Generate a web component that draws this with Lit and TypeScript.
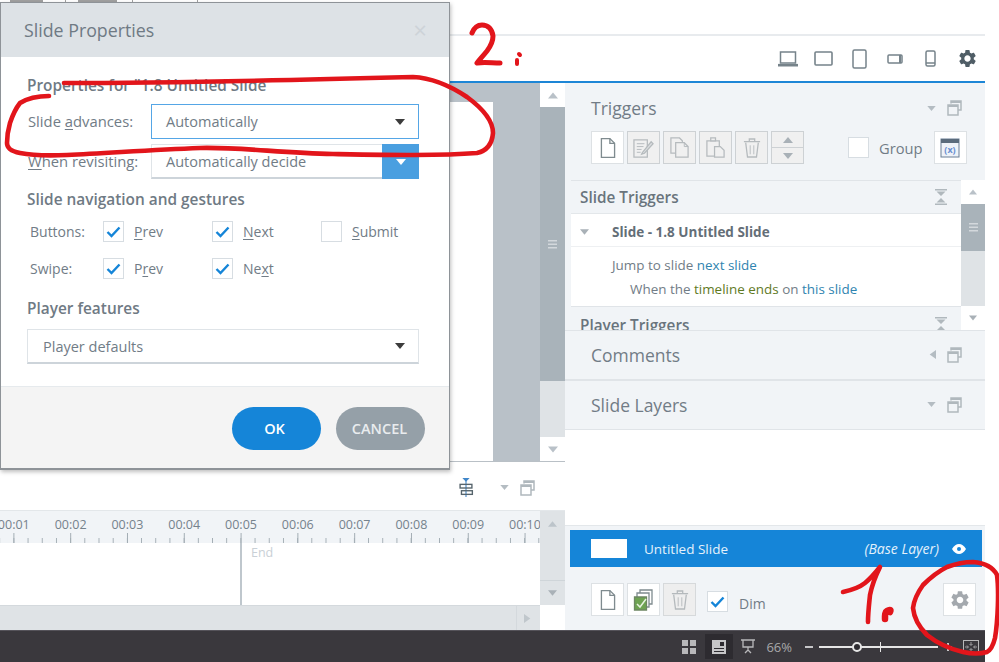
import { LitElement, html, css, svg } from "lit";
import { customElement } from "lit/decorators.js";

const GEAR = "M19.14 12.94c.04-.3.06-.61.06-.94 0-.32-.02-.64-.07-.94l2.03-1.58a.49.49 0 0 0 .12-.61l-1.92-3.32a.488.488 0 0 0-.59-.22l-2.39.96c-.5-.38-1.03-.7-1.62-.94l-.36-2.54a.484.484 0 0 0-.48-.41h-3.84c-.24 0-.43.17-.47.41l-.36 2.54c-.59.24-1.13.57-1.62.94l-2.39-.96c-.22-.08-.47 0-.59.22L2.74 8.87c-.12.21-.08.47.12.61l2.03 1.58c-.05.3-.09.63-.09.94s.02.64.07.94l-2.03 1.58a.49.49 0 0 0-.12.61l1.92 3.32c.12.22.37.29.59.22l2.39-.96c.5.38 1.03.7 1.62.94l.36 2.54c.05.24.24.41.48.41h3.84c.24 0 .44-.17.47-.41l.36-2.54c.59-.24 1.13-.56 1.62-.94l2.39.96c.22.08.47 0 .59-.22l1.92-3.32c.12-.22.07-.47-.12-.61l-2.01-1.58zM12 15.6c-1.98 0-3.6-1.62-3.6-3.6s1.62-3.6 3.6-3.6 3.6 1.62 3.6 3.6-1.62 3.6-3.6 3.6z";

const gear = (size: number, color: string) => html`<svg width=${size} height=${size} viewBox="0 0 24 24"><path d=${GEAR} fill=${color}></path></svg>`;

const docIcon = (c = "#7f8b8f") => html`<svg width="16" height="22" viewBox="0 0 17 23" fill="#fff" stroke=${c} stroke-width="1.4"><path d="M1.5 1.5h9l5 5v15h-14z"></path><path d="M10.5 1.5v5h5" fill="none"></path></svg>`;
const editIcon = () => html`<svg width="23" height="22" viewBox="0 0 24 23" fill="none" stroke="#b5babd" stroke-width="1.3"><path d="M2 3h14v18H2z"></path><path d="M5 7h8M5 10h7M5 13h5M5 16h4" stroke-width="1"></path><path d="M11 16l9-11 2 2-9 10-3 1z" fill="#dcdfe1"></path></svg>`;
const copyIcon = () => html`<svg width="21" height="23" viewBox="0 0 22 24" fill="#f0f0f0" stroke="#b5babd" stroke-width="1.3"><path d="M2 2h9l3 3v13H2z"></path><path d="M7 7h9l4 4v11H7z"></path><path d="M16 7v4h4" fill="none" stroke-width="1"></path></svg>`;
const pasteIcon = () => html`<svg width="21" height="23" viewBox="0 0 22 24" fill="#f0f0f0" stroke="#b5babd" stroke-width="1.3"><path d="M2 5h13v16H2z"></path><path d="M6 5V2h5v3z"></path><path d="M10 11h6l4 4v7H10z"></path></svg>`;
const trashIcon = (c = "#b5babd") => html`<svg width="18" height="22" viewBox="0 0 20 24" fill="none" stroke=${c} stroke-width="1.4"><path d="M1 5h18M7 5V2h6v3"></path><path d="M3 6l2 16h10l2-16"></path><path d="M8 9v10M12 9v10" stroke-width="1"></path></svg>`;
const windowIcon = () => html`<svg width="15" height="16" viewBox="0 0 15 16" fill="none" stroke="#b0b8bd" stroke-width="1.5"><path d="M4 3.500V1h10v9h-3"></path><path d="M1 5h10v10H1z"></path><path d="M1 6h10M4 2h10" stroke-width="2"></path></svg>`;
const tri = (dir: string, color: string, w = 10, h = 6) => {
  const pts: Record<string, string> = { down: "0,0 10,0 5,6", up: "0,6 10,6 5,0", left: "10,0 10,10 3,5", right: "0,0 0,10 7,5" };
  return html`<svg width=${w} height=${h} viewBox=${dir === "down" || dir === "up" ? "0 0 10 6" : "0 0 10 10"}><polygon points=${pts[dir]} fill=${color}></polygon></svg>`;
};
const collapseIcon = () => html`<svg width="12" height="16" viewBox="0 0 12 16" fill="#b0b8bd"><path d="M0 0h12v1.400H0zM1.500 2.500h9L6 7zM6 9l4.500 4.500h-9zM0 14.600h12V16H0z"></path></svg>`;
const check = () => html`<svg width="15" height="12" viewBox="0 0 15 12" fill="none" stroke="#1585d8" stroke-width="2.400"><path d="M1.500 6l4 4 8-8.500"></path></svg>`;
const grip = () => html`<svg width="9" height="9" viewBox="0 0 9 9" fill="#d3d8dc"><path d="M0 0h9v1.600H0zM0 3.500h9v1.600H0zM0 7h9v1.600H0z"></path></svg>`;

@customElement("app-root")
export class AppRoot extends LitElement {
  static styles = css`
    :host { display: block; position: relative; width: 999px; height: 662px; overflow: hidden; background: #fff;
      font-family: "Open Sans", "Noto Sans", sans-serif; color: #717c86; font-size: 14px; }
    * { box-sizing: border-box; }
    u { text-underline-offset: 2px; }
    .app { width: 985px; height: 662px; display: flex; flex-direction: column; }

    .ribbon { height: 36px; flex: none; border-bottom: 2px solid #e8ebee; display: flex; align-items: flex-start; }
    .ribbon i { display: block; height: 2px; background: #a0a0a0; }
    .viewbar { height: 47px; flex: none; display: flex; align-items: center; justify-content: flex-end; padding: 0 7px 0 0; border-bottom: 2px solid #1d86d6; }
    .viewbar svg { display: block; }
    .dev { display: flex; justify-content: center; align-items: center; }

    .main { flex: 1; display: flex; min-height: 0; }
    .left { width: 565px; flex: none; display: flex; flex-direction: column; }
    .right { flex: 1; min-width: 0; display: flex; flex-direction: column; background: #f1f4f7; }

    .stage { height: 379px; flex: none; display: flex; border-bottom: 1px solid #b9c0c6; }
    .canvas { flex: 1; background: #b9c1c8; padding: 19px 47px 0 0; }
    .slide { background: #fff; height: 100%; }
    .vscroll { width: 25px; flex: none; display: flex; flex-direction: column; background: #dfe3e6; }
    .sbtn { height: 24px; flex: none; background: #fff; display: flex; align-items: center; justify-content: center; }
    .thumb { background: #a9b3ba; display: flex; align-items: center; justify-content: center; flex: none; }
    .track { flex: 1; }

    .tl-tools { height: 49px; flex: none; display: flex; align-items: center; justify-content: flex-end; padding: 3px 30px 0 0; gap: 11px; border-bottom: 1px solid #e3e7ea; }
    .tl-tools .align { margin-right: 14px; display: block; }
    .tl-body { flex: 1; display: flex; min-height: 0; }
    .tl-main { flex: 1; min-width: 0; display: flex; flex-direction: column; }
    .ruler { height: 32px; flex: none; overflow: hidden; background-color: #f1f4f7;
      background-image: linear-gradient(90deg, #a3adb4 1px, transparent 1px), linear-gradient(90deg, #a3adb4 1px, transparent 1px);
      background-repeat: repeat-x; background-size: 56.8px 10px, 14.2px 5px;
      background-position: 13.4px 100%, 13.4px 100%; }
    .labels { display: flex; margin-left: -14.6px; padding-top: 5px; }
    .labels span { width: 56.8px; flex: none; text-align: center; font-size: 12.5px; line-height: 18px; color: #75828c; }
    .tracks { flex: 1; background: #fff; padding-left: 240px; display: flex; }
    .endline { border-left: 2px solid #bfc7cd; padding: 1px 0 0 9px; font-size: 12.5px; line-height: 18px; color: #c9d0d6; }
    .hscroll { height: 25px; flex: none; background: #dfe3e6; border-top: 1px solid #d4d9dd; display: flex; justify-content: flex-end; }
    .hbtn { width: 24px; border-left: 1px solid #d4d9dd; display: flex; align-items: center; justify-content: center; }
    .tl-vs { width: 25px; flex: none; display: flex; flex-direction: column; margin-bottom: 25px; background: #dfe3e6; }
    .tl-vs .b { height: 26px; display: flex; align-items: center; justify-content: center; }
    .tl-vs .b.low { height: 24px; }
    .tl-vs .m { flex: 1; border-bottom: 1px solid #cfd5d9; }

    .panel { padding: 0 23px 0 26px; }
    .ptitle { display: flex; align-items: center; font-size: 17.5px; color: #717c86; }
    .ptitle span { flex: 1; }
    .ptitle .chev { margin-right: 11px; display: flex; align-items: center; justify-content: center; width: 10px; }
    .triggers { height: 97px; flex: none; padding-top: 10px; }
    .triggers .ptitle { height: 30px; }
    .tools { display: flex; align-items: center; margin-top: 8px; gap: 3px; }
    .tb { width: 33px; height: 33px; border: 1.5px solid #dde1e4; background: #fff; display: flex; align-items: center; justify-content: center; flex: none; }
    .tb.off { background: #f0f0f0; border-color: #cdd1d4; }
    .tb.ud { flex-direction: column; padding: 0; }
    .tb.ud div { flex: 1; width: 100%; display: flex; align-items: center; justify-content: center; }
    .tb.ud div + div { border-top: 1.5px solid #cdd1d4; }
    .box { width: 21px; height: 21px; border: 1.5px solid #d7dde2; background: #fff; display: flex; align-items: center; justify-content: center; flex: none; }
    .grp { margin-left: 41px; }
    .grptxt { margin: 0 8px 0 7px; font-size: 14.7px; }

    .tlist { height: 150px; flex: none; display: flex; overflow: hidden; padding-left: 6px; }
    .tl { flex: 1; min-width: 0; background: #fff; }
    .thead { height: 34px; background: #f1f4f7; border-top: 1px solid #e0e4e8; border-bottom: 1.5px solid #e3e7ea; display: flex; align-items: center; justify-content: space-between; padding: 0 14px 0 9px; font-weight: 600; font-size: 15.3px; color: #69747d; }
    .thead.low { padding-top: 4px; }
    .trow { height: 33px; padding-top: 3px; border-bottom: 1.5px solid #eef0f2; display: flex; align-items: center; font-weight: 700; font-size: 13.5px; color: #646e77; }
    .trow .ar { width: 41px; padding-left: 9px; display: flex; }
    .act { padding: 6px 0 0 41px; height: 59px; font-size: 13.45px; line-height: 24px; color: #717c86; }
    .act div + div { padding-left: 18px; }
    .blue { color: #2f84b0; }
    .olive { color: #5f7a1f; }
    .tl-scroll { width: 24px; flex: none; display: flex; flex-direction: column; background: #dfe3e6; }

    .sec { height: 50px; flex: none; display: flex; align-items: center; padding-bottom: 1px; border-top: 1px solid #e0e4e8; border-bottom: 1px solid #e0e4e8; }
    .sec .ptitle { flex: 1; }
    .blank { height: 96px; flex: none; background: #fff; border-bottom: 1.5px solid #e3e7ea; }
    .layer { height: 37px; flex: none; margin: 4px 3px 0 5px; background: #1585d8; display: flex; align-items: center; padding: 0 16px 0 21px; color: #e4f1fb; }
    .layer .pic { width: 36px; height: 19px; background: #fff; margin-right: 17px; }
    .layer .nm { flex: 1; font-size: 13.5px; }
    .layer em { font-size: 14px; margin-right: 13px; }
    .laytools { flex: 1; display: flex; align-items: flex-start; padding: 16px 9px 0 26px; gap: 3px; }
    .laytools .box { margin: 8px 0 0 8px; }
    .laytools .dim { margin: 11px 0 0 8px; font-size: 14px; flex: 1; }
    .tb.off2 { background: #eeeeee; border-color: #d6d9db; }

    .status { height: 32px; flex: none; background: #3a383d; display: flex; align-items: center; justify-content: flex-end; padding-right: 6px; color: #a8a8aa; font-size: 13px; border-top: 1px solid #55535a; }
    .status svg { display: block; }
    .cur { width: 28px; height: 25px; background: #2d2b30; display: flex; align-items: center; justify-content: center; margin: 0 8px 0 9px; }
    .pct { margin: 0 13px 0 11px; }
    .slider { width: 119px; height: 2px; background: #e6e6e6; margin: 0 6px; position: relative; }
    .knob { position: absolute; left: 33px; top: -4px; width: 10px; height: 10px; border-radius: 50%; background: #2d2b30; border: 2px solid #e6e6e6; }
    .tick { position: absolute; left: 61px; top: -4px; width: 1px; height: 10px; background: #e6e6e6; }
    .gapfit { width: 11px; }

    .dialog { position: absolute; left: 0; top: 2px; width: 450px; height: 468px; background: #fff; border: 1px solid #8e9398; border-width: 1px 1.5px 2px 1px; box-shadow: 1px 2px 4px rgba(0,0,0,.25); display: flex; flex-direction: column; }
    .dhead { height: 54px; flex: none; background: #dde2e6; display: flex; align-items: center; justify-content: space-between; padding: 0 22px 0 23px; font-size: 17.8px; color: #6f7a84; }
    .close { color: #cdd3d8; font-size: 24px; line-height: 1; }
    .dbody { flex: 1; padding: 20px 30px 0 26px; }
    h4 { margin: 0; font-size: 15.4px; line-height: 18px; font-weight: 600; color: #6f7a84; }
    .field { display: flex; align-items: center; }
    .field label { width: 124px; flex: none; padding: 0 0 2px 1px; font-size: 14.8px; }
    .sel { height: 35px; flex: 1; background: #fff; border: 1px solid #dfe4e8; border-bottom: 2px solid #cdd4da; display: flex; align-items: center; justify-content: space-between; padding: 0 13px 0 14px; font-size: 14.5px; color: #717c86; }
    .sel.focus { border: 1.5px solid #55a6e6; }
    .sel.btn { padding-right: 0; }
    .sel.pl { padding-left: 15px; }
    .sel .drop { width: 37px; align-self: stretch; background: #4a9fe0; display: flex; align-items: center; justify-content: center; margin: -1px -1px -2px 0; }
    .f1 { margin-top: 9px; }
    .f2 { margin-top: 5px; }
    .h2 { margin-top: 12px; }
    .opts { display: grid; grid-template-columns: 76px 109px 109px auto; row-gap: 16px; margin-top: 12px; align-items: center; }
    .opts .lbl { padding-left: 3px; }
    .opt { display: flex; align-items: center; gap: 10px; }
    .h3 { margin-top: 21px; }
    .sel.pl { margin-top: 11px; }
    .dfoot { height: 82px; flex: none; background: #f4f4f4; border-top: 1.5px solid #e6eaed; display: flex; justify-content: flex-end; gap: 15px; padding: 20px 24px 0 0; }
    .pill { width: 89px; height: 43px; border-radius: 22px; display: flex; align-items: center; justify-content: center; color: #fff; font-weight: 600; font-size: 14.5px; }
    .pill.ok { background: #1585d8; padding-right: 4px; }
    .pill.no { background: #95a0a8; color: #e9ecee; padding-right: 2px; }

    .ink { position: absolute; left: 0; top: 0; pointer-events: none; }
  `;

  private rib() {
    return html`<div class="ribbon"><i style="width:33px;margin-left:10px"></i><i style="width:1px;margin-left:22px"></i><i style="width:39px;margin-left:12px"></i><i style="width:1px;margin-left:15px"></i><i style="width:1px;margin-left:64px"></i></div>`;
  }

  private viewbar() {
    const s = "#76838a";
    const d = (w: number, v: unknown) => html`<div class="dev" style="width:${w}px">${v}</div>`;
    return html`<div class="viewbar">
      ${d(20, html`<svg width="20" height="16" viewBox="0 0 20 16" fill="none" stroke=${s} stroke-width="1.500"><path d="M2.500 1h15v11h-15z"></path><path d="M0 14.200h20" stroke-width="2.600"></path></svg>`)}
      <div style="width:16px"></div>
      ${d(19, html`<svg width="19" height="15" viewBox="0 0 19 15" fill="none" stroke=${s} stroke-width="1.600"><rect x="1" y="1" width="17" height="13" rx="1"></rect></svg>`)}
      <div style="width:19px"></div>
      ${d(15, html`<svg width="15" height="20" viewBox="0 0 15 20" fill="none" stroke=${s} stroke-width="1.500"><rect x="1" y="1" width="13" height="18" rx="1.500"></rect></svg>`)}
      <div style="width:20px"></div>
      ${d(16, html`<svg width="16" height="10" viewBox="0 0 16 10" fill="none" stroke=${s} stroke-width="1.500"><rect x="1" y="1" width="14" height="8" rx="1"></rect><path d="M13 1v8" stroke-width="2"></path></svg>`)}
      <div style="width:22px"></div>
      ${d(11, html`<svg width="11" height="17" viewBox="0 0 11 17" fill="none" stroke=${s} stroke-width="1.500"><rect x="1" y="1" width="9" height="15" rx="1.500"></rect><path d="M1 13h9"></path></svg>`)}
      <div style="width:21px"></div>
      ${gear(21, "#4f5d66")}
    </div>`;
  }

  private stage() {
    return html`<div class="stage">
      <div class="canvas"><div class="slide"></div></div>
      <div class="vscroll">
        <div class="sbtn">${tri("up", "#b9c1c8", 10, 7)}</div>
        <div class="thumb" style="height:274px">${grip()}</div>
        <div class="track"></div>
        <div class="sbtn">${tri("down", "#b9c1c8", 10, 7)}</div>
      </div>
    </div>`;
  }

  private timeline() {
    const labels = ["00:01","00:02","00:03","00:04","00:05","00:06","00:07","00:08","00:09","00:10"];
    return html`
      <div class="tl-tools">
        <svg class="align" width="18" height="20" viewBox="0 0 18 22" fill="none"><path d="M9 2v19" stroke="#3f86c9" stroke-width="1.200"></path><path d="M5 0h8L9 4z" fill="#3f86c9"></path><rect x="2.500" y="7" width="13" height="4" stroke="#56646c" stroke-width="1.500"></rect><rect x="4" y="14" width="12" height="4" stroke="#56646c" stroke-width="1.500"></rect></svg>
        ${tri("down", "#b4bcc2", 9, 5)}
        ${windowIcon()}
      </div>
      <div class="tl-body">
        <div class="tl-main">
          <div class="ruler"><div class="labels">${labels.map(l => html`<span>${l}</span>`)}</div></div>
          <div class="tracks"><div class="endline">End</div></div>
          <div class="hscroll"><div class="hbtn">${tri("right", "#c0c7cc", 9, 9)}</div></div>
        </div>
        <div class="tl-vs">
          <div class="b">${tri("up", "#bcc4ca", 9, 6)}</div>
          <div class="m"></div>
          <div class="b low">${tri("down", "#a9b1b7", 9, 6)}</div>
        </div>
      </div>`;
  }

  private triggers() {
    return html`
      <div class="panel triggers">
        <div class="ptitle"><span>Triggers</span><div class="chev">${tri("down", "#b4bcc2", 9, 5)}</div>${windowIcon()}</div>
        <div class="tools">
          <div class="tb">${docIcon()}</div>
          <div class="tb off">${editIcon()}</div>
          <div class="tb off">${copyIcon()}</div>
          <div class="tb off">${pasteIcon()}</div>
          <div class="tb off">${trashIcon()}</div>
          <div class="tb off ud"><div>${tri("up", "#a9b1b7", 10, 6)}</div><div>${tri("down", "#a9b1b7", 10, 6)}</div></div>
          <div class="box grp"></div>
          <div class="grptxt">Group</div>
          <div class="tb">
            <svg width="20" height="20" viewBox="0 0 20 20"><rect x="1" y="1" width="18" height="18" fill="#eef2f8" stroke="#6a7f96"></rect><rect x="1" y="1" width="18" height="4" fill="#5a6b7c"></rect><text x="10" y="15" text-anchor="middle" font-size="9" font-weight="700" fill="#6a8fd0" font-family="Open Sans">(x)</text></svg>
          </div>
        </div>
      </div>
      <div class="tlist">
        <div class="tl">
          <div class="thead">Slide Triggers ${collapseIcon()}</div>
          <div class="trow"><div class="ar">${tri("down", "#a9b1b7", 9, 6)}</div>Slide - 1.8 Untitled Slide</div>
          <div class="act">
            <div>Jump to slide <span class="blue">next slide</span></div>
            <div>When the <span class="olive">timeline ends</span> on <span class="blue">this slide</span></div>
          </div>
          <div class="thead low">Player Triggers ${collapseIcon()}</div>
        </div>
        <div class="tl-scroll">
          <div class="sbtn">${tri("up", "#b9c1c8", 8, 6)}</div>
          <div class="thumb" style="height:47px">${grip()}</div>
          <div class="track"></div>
          <div class="sbtn">${tri("down", "#a9b1b7", 8, 6)}</div>
        </div>
      </div>`;
  }

  private sec(name: string, dir: string) {
    return html`<div class="sec panel"><div class="ptitle"><span>${name}</span><div class="chev">${dir === "left" ? tri("left", "#b4bcc2", 9, 9) : tri("down", "#b4bcc2", 9, 5)}</div>${windowIcon()}</div></div>`;
  }

  private layers() {
    return html`
      <div class="blank"></div>
      <div class="layer">
        <div class="pic"></div>
        <div class="nm">Untitled Slide</div>
        <em>(Base Layer)</em>
        <svg width="14" height="10" viewBox="0 0 14 10"><path d="M0 5c2-3.400 4.400-5 7-5s5 1.600 7 5c-2 3.400-4.400 5-7 5s-5-1.600-7-5z" fill="#fff"></path><circle cx="7" cy="5" r="2" fill="#1585d8"></circle></svg>
      </div>
      <div class="laytools">
        <div class="tb">${docIcon()}</div>
        <div class="tb">
          <svg width="22" height="24" viewBox="0 0 22 24" fill="none"><path d="M7 2h12v14H7z" fill="#fff" stroke="#7f8b8f" stroke-width="1.300"></path><path d="M4 5h12v14H4z" fill="#fff" stroke="#7f8b8f" stroke-width="1.300"></path><path d="M1.500 9h12v13h-12z" fill="#6ea352" stroke="#6d8763" stroke-width="1.300"></path><path d="M4 16l3 3 6-8" stroke="#e8f3e0" stroke-width="1.500"></path></svg>
        </div>
        <div class="tb off2">${trashIcon("#b4b9bc")}</div>
        <div class="box">${check()}</div>
        <div class="dim">Dim</div>
        <div class="tb">${gear(22, "#a4a9ae")}</div>
      </div>`;
  }

  private status() {
    return html`<div class="status">
      <svg width="14" height="14" viewBox="0 0 14 14" fill="#b8b8ba"><path d="M0 0h6v6H0zM8 0h6v6H8zM0 8h6v6H0zM8 8h6v6H8z"></path></svg>
      <div class="cur"><svg width="14" height="14" viewBox="0 0 14 14" fill="#c6c6c8"><path d="M0 0h14v14H0z"></path><path d="M8 2h4v4H8z" fill="#2d2b30"></path><path d="M2 8h10v1H2zM2 11h10v1H2z" fill="#2d2b30"></path></svg></div>
      <svg width="14" height="15" viewBox="0 0 14 15" fill="none" stroke="#b8b8ba" stroke-width="1.300"><path d="M0 1h14M2 1v7h10V1M7 8v3M4 14l3-3 3 3"></path></svg>
      <div class="pct">66%</div>
      <svg width="8" height="2" viewBox="0 0 8 2"><path d="M0 0h8v2H0z" fill="#c6c6c8"></path></svg>
      <div class="slider"><div class="knob"></div><div class="tick"></div></div>
      <svg width="8" height="8" viewBox="0 0 8 8"><path d="M3 0h2v3h3v2H5v3H3V5H0V3h3z" fill="#c6c6c8"></path></svg>
      <div class="gapfit"></div>
      <svg width="16" height="14" viewBox="0 0 16 14" fill="none" stroke="#b8b8ba"><rect x=".5" y=".5" width="15" height="13"></rect><path d="M8 2v3M6.500 4L8 5.500 9.500 4M2 7h3M4 5.500L5.500 7 4 8.500M14 7h-3M12 5.500L10.500 7 12 8.500M8 12V9M6.500 10L8 8.500 9.500 10" stroke-width=".8"></path></svg>
    </div>`;
  }

  private dialog() {
    const opt = (v: boolean, lab: unknown) => html`<div class="opt"><div class="box">${v ? check() : ""}</div><div>${lab}</div></div>`;
    return html`<div class="dialog">
      <div class="dhead"><span>Slide Properties</span><span class="close">×</span></div>
      <div class="dbody">
        <h4>Properties for "1.8 Untitled Slide</h4>
        <div class="field f1"><label>Slide <u>a</u>dvances:</label>
          <div class="sel focus"><span>Automatically</span>${tri("down", "#3c3c3c", 10, 6)}</div></div>
        <div class="field f2"><label><u>W</u>hen revisiting:</label>
          <div class="sel btn"><span>Automatically decide</span><div class="drop">${tri("down", "#fff", 10, 6)}</div></div></div>
        <h4 class="h2">Slide navigation and gestures</h4>
        <div class="opts">
          <div class="lbl">Buttons:</div>
          ${opt(true, html`<u>P</u>rev`)}
          ${opt(true, html`<u>N</u>ext`)}
          ${opt(false, html`<u>S</u>ubmit`)}
          <div class="lbl">Swipe:</div>
          ${opt(true, html`P<u>r</u>ev`)}
          ${opt(true, html`Ne<u>x</u>t`)}
          <div></div>
        </div>
        <h4 class="h3">Player features</h4>
        <div class="sel pl"><span>Player defaults</span>${tri("down", "#3c3c3c", 10, 6)}</div>
      </div>
      <div class="dfoot"><div class="pill ok">OK</div><div class="pill no">CANCEL</div></div>
    </div>`;
  }

  private ink() {
    return html`<svg class="ink" width="999" height="662" viewBox="0 0 999 662" fill="none" stroke="#e2151b" stroke-width="4.600" stroke-linecap="round" stroke-linejoin="round">
      ${svg`
        <path d="M64 83C150 83 300 80 413 77C435 78 452 87 467 97C482 108 493 120 493 133C492 145 486 151 477 153C440 156 390 155 333 154C280 153 240 147 200 148C150 150 110 153 67 155C45 156 30 155 20 153C10 151 7 148 7 143C7 135 8 130 10 123C13 114 16 108 20 103C28 98 38 96 49 96"></path>
        <path d="M472 33C474 28 477 25 482 25C488 25 492 29 493 36C493 43 490 47 487 51C483 56 480 59 477 63C484 62 492 63 500 63" stroke-width="5"></path>
        <path d="M519 54L520 55M517 60L517 64" stroke-width="4"></path>
        <path d="M843 592C852 590 860 587 865 583C871 578 876 572 880 567C876 575 872 585 870 595C869 605 868 613 868 622" stroke-width="4.600"></path>
        <path d="M885 619C885 615 885 612 887 611C890 609 891 610 890 612" stroke-width="6.500"></path>
        <path d="M947 567C955 564 965 562 973 562C985 563 993 567 997 575C999 590 998 620 995 638C993 646 991 650 987 652C980 654 972 654 963 652C950 649 937 643 927 635C919 627 914 618 913 608C914 600 918 592 923 585C931 577 939 571 947 567"></path>
      `}
    </svg>`;
  }

  render() {
    return html`
      <div class="app">
        ${this.rib()}
        ${this.viewbar()}
        <div class="main">
          <div class="left">${this.stage()}${this.timeline()}</div>
          <div class="right">
            ${this.triggers()}
            ${this.sec("Comments", "left")}
            ${this.sec("Slide Layers", "down")}
            ${this.layers()}
          </div>
        </div>
        ${this.status()}
      </div>
      ${this.dialog()}
      ${this.ink()}
    `;
  }
}
